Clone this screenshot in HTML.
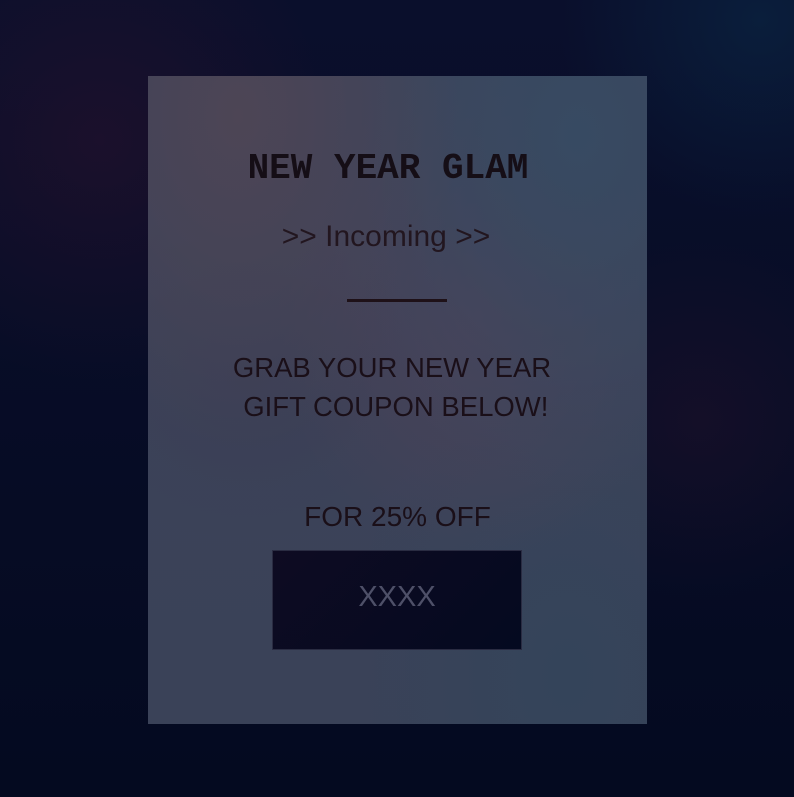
<!DOCTYPE html>
<html><head><style>
html,body{margin:0;padding:0;width:794px;height:797px;overflow:hidden}
body{background:#060c22;position:relative;
background-image:radial-gradient(circle at 100px 140px,rgba(45,18,45,.5),transparent 240px),radial-gradient(circle at 760px 20px,rgba(10,40,70,.6),transparent 200px),radial-gradient(circle at 700px 420px,rgba(45,20,45,.35),transparent 180px),linear-gradient(#0a0f2c,#040a20);}
.card{position:absolute;left:148px;top:76px;width:499px;height:648px;
background:radial-gradient(ellipse at 90px 40px,#4d4555,transparent 220px),radial-gradient(ellipse at 430px 60px,#374a62,transparent 260px),radial-gradient(ellipse at 330px 240px,#4a4258,transparent 200px),radial-gradient(ellipse at 420px 600px,#34445a,transparent 220px),radial-gradient(ellipse at 100px 300px,#3b3f55,transparent 200px),linear-gradient(#3d435a,#3a4258);
font-family:"Liberation Sans",sans-serif;color:#1a0f18;text-align:center}
.t{position:absolute;left:0;width:480px;top:72px;font-family:"Liberation Mono",monospace;font-weight:bold;font-size:36px;color:#150e16}
.i{position:absolute;left:0;width:476px;top:144px;font-size:30px;color:#22161f}
.l{position:absolute;left:199px;top:223px;width:100px;height:3px;background:#1e1118}
.g{position:absolute;left:0;width:488px;top:272px;font-size:27.5px;line-height:39px}
.f{position:absolute;left:0;right:0;top:425px;font-size:28px}
.b{position:absolute;left:124px;top:474px;width:248px;height:98px;background:linear-gradient(135deg,#0e0b22,#040a20);border:1px solid #2a2c42;color:#4e5068;font-size:29px;line-height:92px}
</style></head><body>
<div class="card">
<div class="t">NEW YEAR GLAM</div>
<div class="i">&gt;&gt; Incoming &gt;&gt;</div>
<div class="l"></div>
<div class="g">GRAB YOUR NEW YEAR<br>&nbsp;GIFT COUPON BELOW!</div>
<div class="f">FOR 25% OFF</div>
<div class="b">XXXX</div>
</div>
</body></html>
